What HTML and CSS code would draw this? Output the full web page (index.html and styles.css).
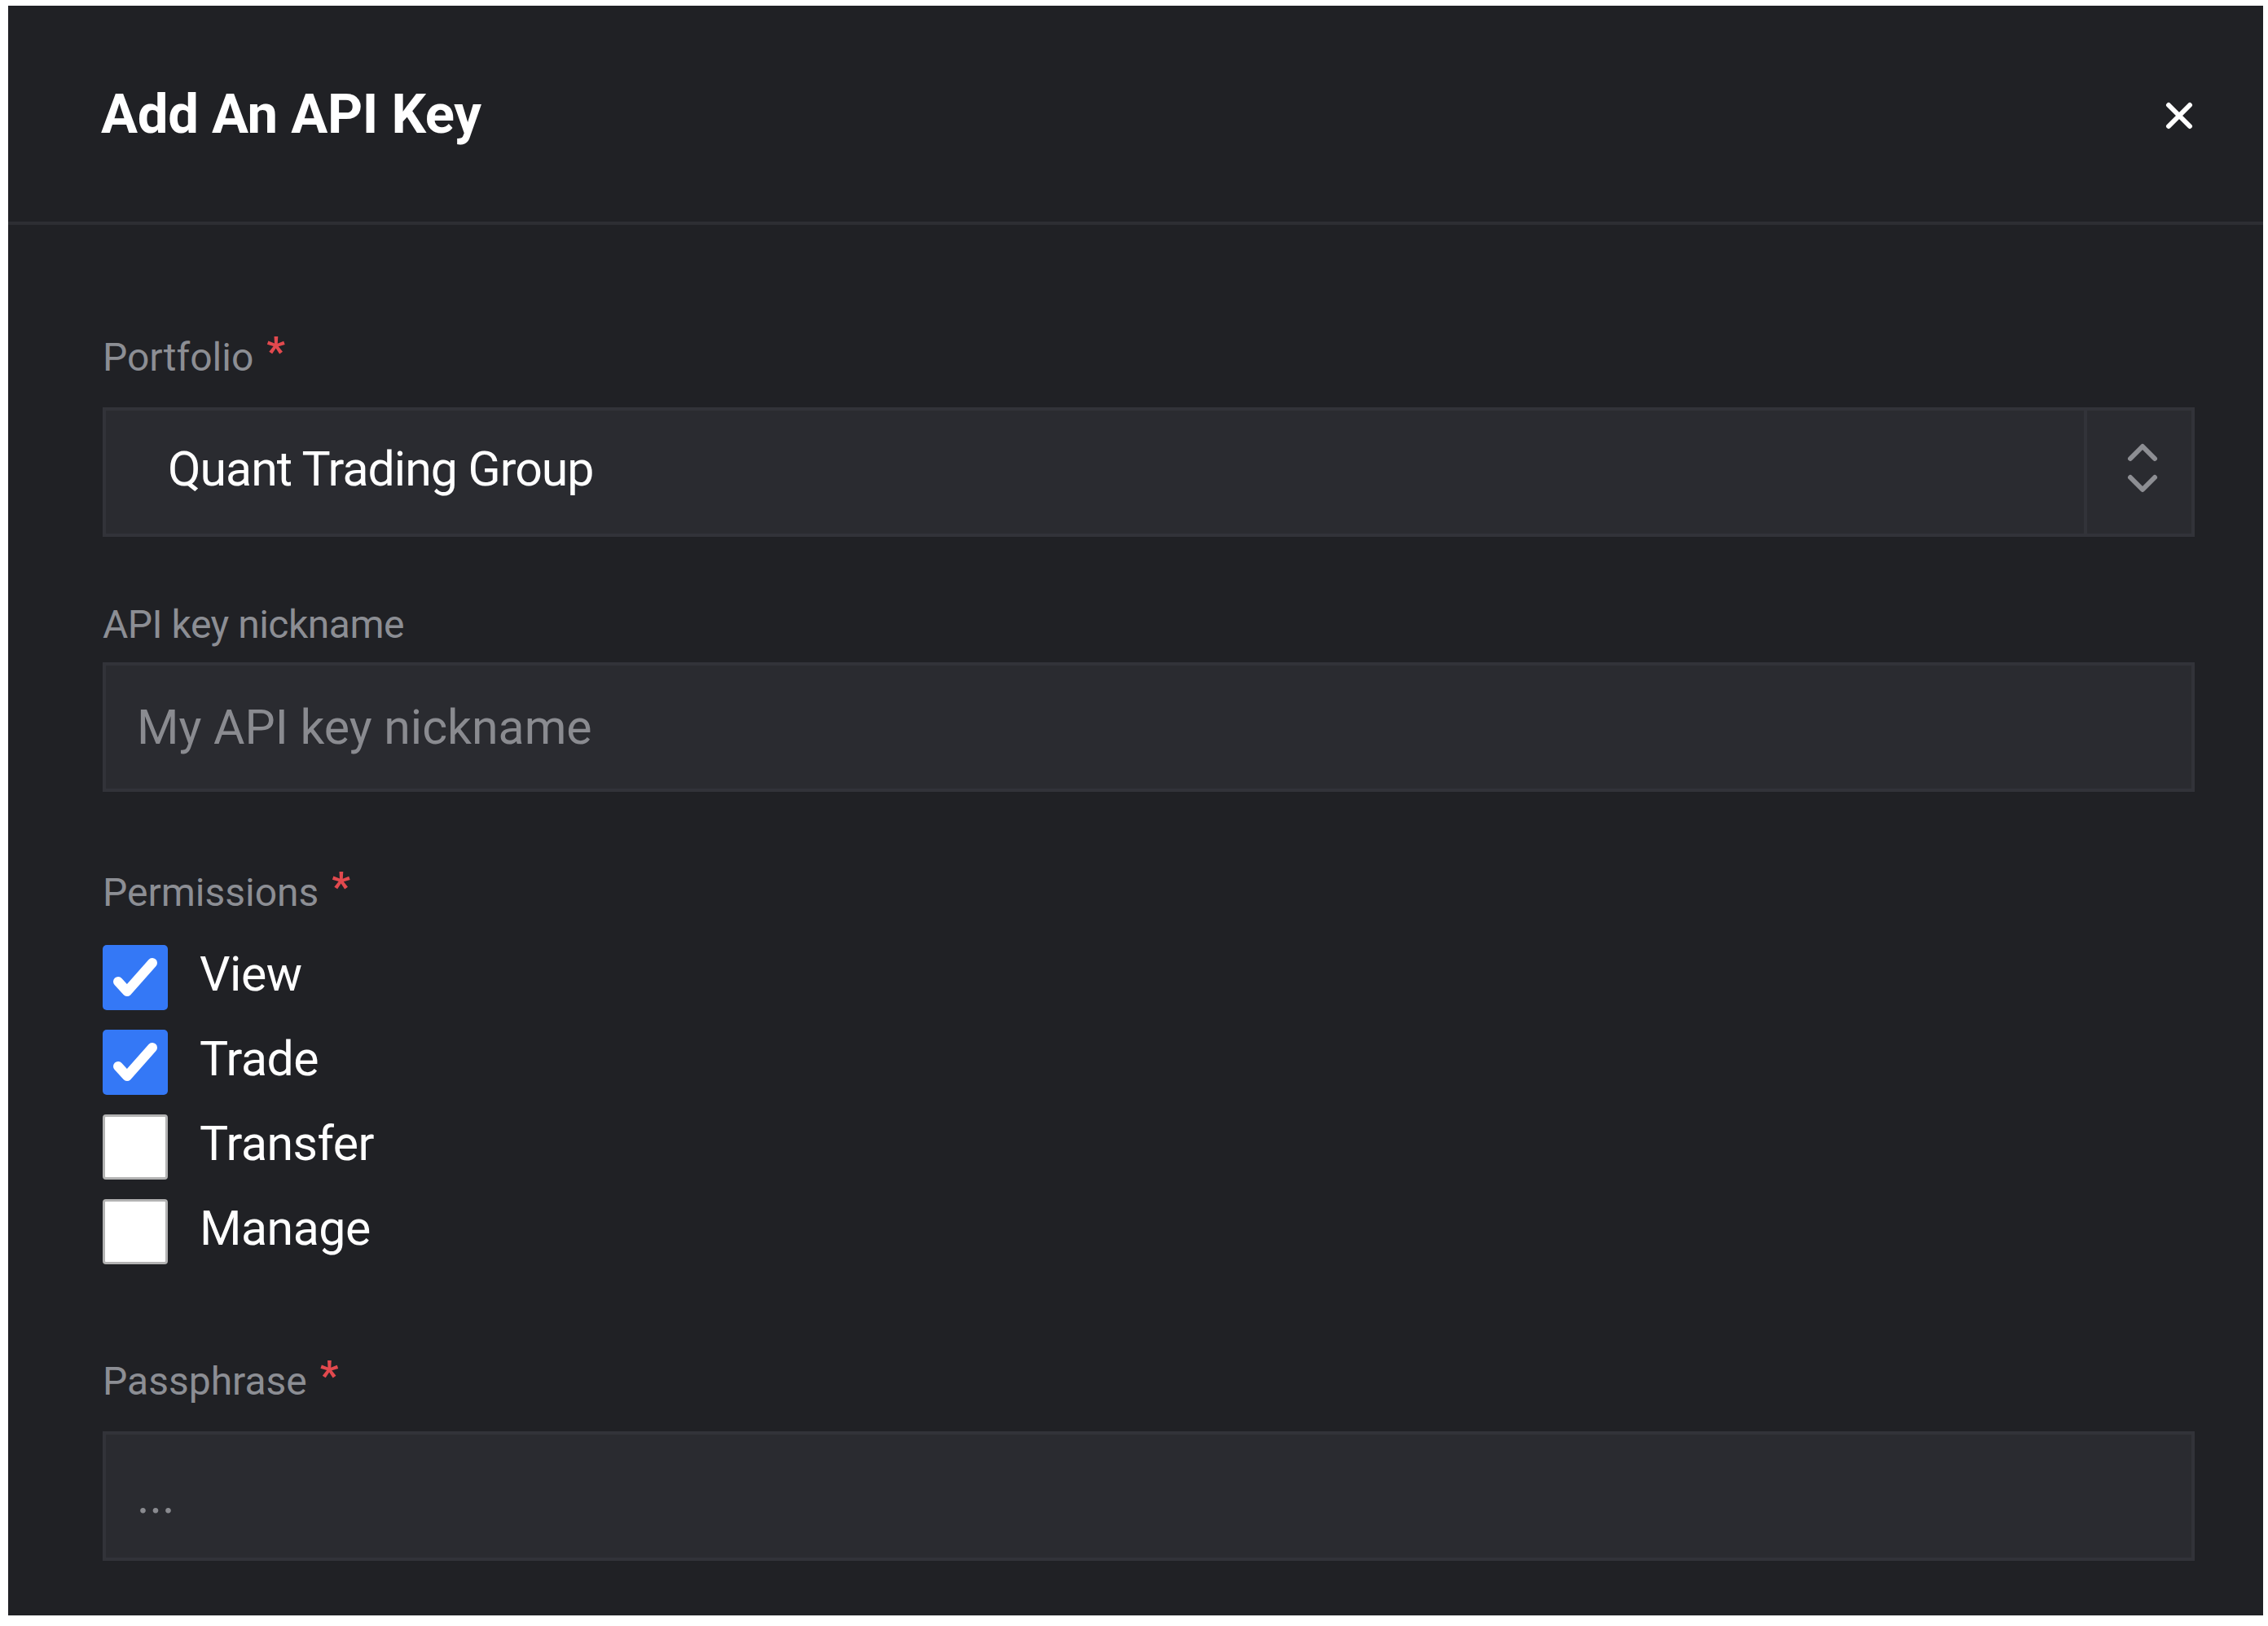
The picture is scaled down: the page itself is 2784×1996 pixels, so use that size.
FILE: index.html
```html
<!DOCTYPE html>
<html>
<head>
  <title>Add An API Key</title>
  <link rel="stylesheet" href="styles.css">
</head>
<body>
  <div class="modal">
    <div class="modal-header">
      <h2>Add An API Key</h2>
      <button class="close" type="button" aria-label="Close">
        <svg width="34" height="34" viewBox="0 0 34 34">
          <path d="M4 4 L30 30 M30 4 L4 30" stroke="#fff" stroke-width="6" stroke-linecap="round"/>
        </svg>
      </button>
    </div>

    <form class="modal-body">
      <div class="field">
        <label class="field-label">Portfolio<span class="req">*</span></label>
        <div class="box">
          <div class="select-value">Quant Trading Group</div>
          <div class="stepper">
            <svg width="40" height="64" viewBox="0 0 40 64">
              <path d="M5 20 L20 5 L35 20 M5 43 L20 58 L35 43" fill="none" stroke="#8d8e93" stroke-width="6" stroke-linecap="round" stroke-linejoin="round"/>
            </svg>
          </div>
        </div>
      </div>

      <div class="field field-nickname">
        <label class="field-label plain" for="nickname">API key nickname</label>
        <div class="box">
          <input class="text-input" type="text" id="nickname" placeholder="My API key nickname">
        </div>
      </div>

      <div class="field field-permissions">
        <label class="field-label perm-label">Permissions<span class="req">*</span></label>
        <div class="checks">
          <div class="check">
            <span class="check-box on">
              <svg width="80" height="80" viewBox="0 0 80 80">
                <path d="M19 45 L30 57 L61 22" fill="none" stroke="#fff" stroke-width="12" stroke-linecap="round" stroke-linejoin="round"/>
              </svg>
            </span>
            <span class="check-text">View</span>
          </div>
          <div class="check">
            <span class="check-box on">
              <svg width="80" height="80" viewBox="0 0 80 80">
                <path d="M19 45 L30 57 L61 22" fill="none" stroke="#fff" stroke-width="12" stroke-linecap="round" stroke-linejoin="round"/>
              </svg>
            </span>
            <span class="check-text">Trade</span>
          </div>
          <div class="check">
            <span class="check-box"></span>
            <span class="check-text">Transfer</span>
          </div>
          <div class="check">
            <span class="check-box"></span>
            <span class="check-text">Manage</span>
          </div>
        </div>
      </div>

      <div class="field field-passphrase">
        <label class="field-label" for="passphrase">Passphrase<span class="req">*</span></label>
        <div class="box">
          <input class="text-input" type="password" id="passphrase" placeholder="...">
        </div>
      </div>
    </form>
  </div>
</body>
</html>
```

FILE: styles.css
```css
/* Add API key modal */

* {
    box-sizing: border-box;
}

body {
    margin: 0;
    padding: 7px 6px 13px 10px;
    background: #fff;
    font-family: Roboto, "Liberation Sans", sans-serif;
}

.modal {
    background: #202125;
}

.modal-header {
    height: 269px;
    display: flex;
    align-items: center;
    justify-content: space-between;
    padding: 0 86px 0 114px;
    border-bottom: 4px solid #2d2e33;
}

.modal-header h2 {
    margin: 0;
    font-size: 67px;
    font-weight: 700;
    line-height: 80px;
    letter-spacing: -0.3px;
    color: #fff;
}

.close {
    display: flex;
    width: 34px;
    height: 34px;
    margin-top: 5px;
    padding: 0;
    border: none;
    background: none;
}

.modal-body {
    display: flex;
    flex-direction: column;
    padding: 135px 84px 67px 116px;
}

.field-nickname {
    margin-top: 80px;
}

.field-permissions {
    margin-top: 96px;
}

.field-passphrase {
    margin-top: 116px;
}

.field-label {
    display: block;
    margin-bottom: 33px;
    font-size: 48px;
    line-height: 56px;
    color: #8c8e94;
}

.field-label.plain {
    margin-bottom: 18px;
    letter-spacing: -0.5px;
}

.field-label.perm-label {
    margin-bottom: 36px;
}

.req {
    margin-left: 16px;
    font-size: 50px;
    font-weight: 700;
    line-height: 0;
    vertical-align: 6px;
    color: #e2494e;
}

.box {
    display: flex;
    height: 159px;
    background: #2a2b30;
    border: 4px solid #323339;
}

.select-value {
    flex: 1;
    display: flex;
    align-items: center;
    padding: 0 0 9px 76px;
    font-size: 59px;
    letter-spacing: -1px;
    color: #fff;
}

.stepper {
    width: 132px;
    display: flex;
    align-items: center;
    justify-content: center;
    padding: 0 0 9px 8px;
    border-left: 4px solid #323339;
}

.text-input {
    flex: 1;
    width: 100%;
    height: 100%;
    padding: 0 38px;
    border: none;
    outline: none;
    background: transparent;
    font-family: inherit;
    font-size: 59px;
    color: #fff;
}

.text-input::placeholder {
    color: #8a8b90;
    opacity: 1;
}

.checks {
    display: flex;
    flex-direction: column;
    gap: 24px;
}

.check {
    display: flex;
    align-items: center;
    height: 80px;
    font-size: 59px;
    color: #fff;
}

.check-box {
    flex: none;
    width: 80px;
    height: 80px;
    background: #fff;
    border: 3px solid #b3b3b3;
    border-radius: 4px;
}

.check-box.on {
    display: flex;
    background: #3478f6;
    border: none;
    border-radius: 5px;
}

.check-text {
    margin-left: 39px;
    padding-bottom: 10px;
    letter-spacing: -0.5px;
}
```
